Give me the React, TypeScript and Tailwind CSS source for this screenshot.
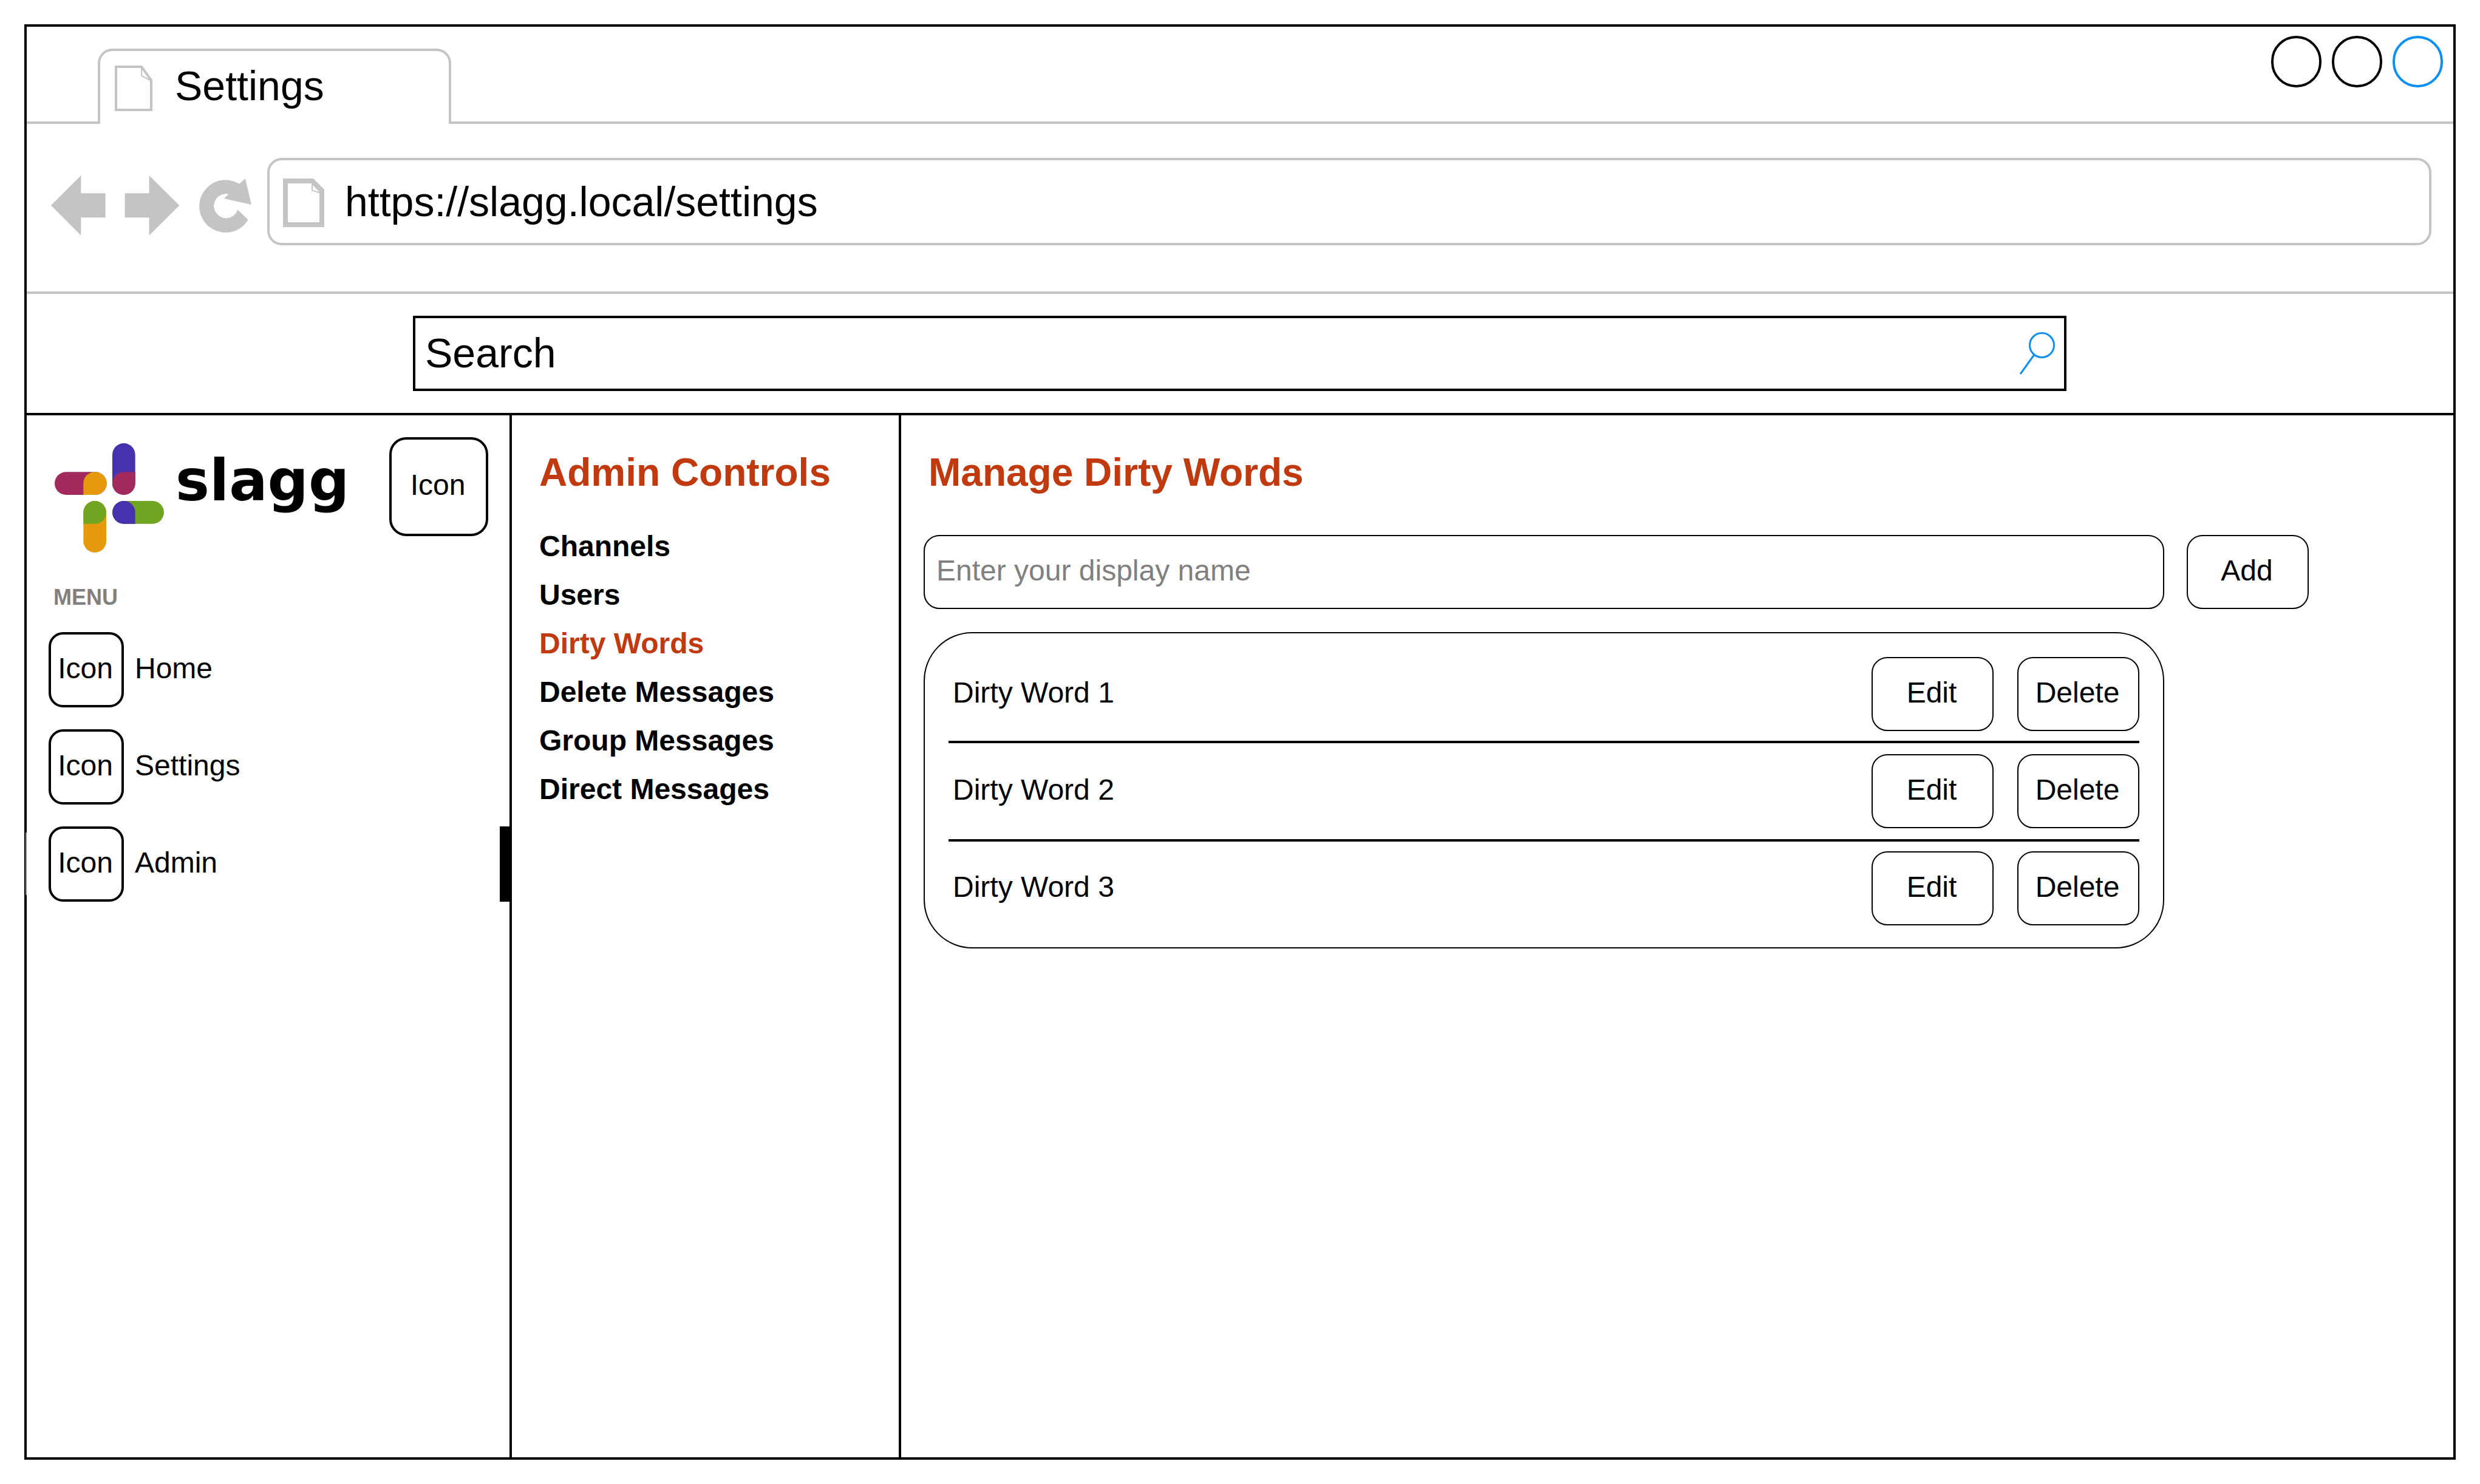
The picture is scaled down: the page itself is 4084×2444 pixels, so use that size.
const sans = "font-['Liberation_Sans',Arial,sans-serif]";

const DocIcon = () => (
  <svg viewBox="0 0 68 80" className="w-[68px] h-[80px] shrink-0">
    <path fill="#c4c4c4" fillRule="evenodd" d="M0 0H50L68 18V80H0ZM8 8V72H60V24L47 20V8Z" />
    <path fill="#c4c4c4" d="M47 8H50L60 20V24L47 20Z" />
    <path fill="#fff" d="M49 11L60 22L49 19Z" />
  </svg>
);

const TabDocIcon = () => (
  <svg viewBox="0 0 62 75" className="w-[62px] h-[75px] shrink-0" fill="none" stroke="#c4c4c4" strokeWidth="4">
    <path d="M2 2H44L60 24V73H2Z" />
    <path strokeWidth="2" d="M44 3V17L60 25" />
  </svg>
);

const NavArrows = () => (
  <svg viewBox="73 146 996 297" className="w-[332px] h-[99px] shrink-0" fill="#c4c4c4">
    <polygon points="73,294 221,146 221,234 342,234 342,354 221,354 221,442" />
    <polygon points="438,234 558,234 558,146 707,294 558,442 558,354 438,354" />
    <path d="M1003 187L1033 162L1063 290L928 260L950 238A60 60 0 1 0 995 315L1047 365A130 130 0 1 1 1003 187Z" />
  </svg>
);

const SearchIcon = () => (
  <svg viewBox="0 0 58 70" className="w-[58px] h-[70px] shrink-0" fill="none" stroke="#0a8ff5" strokeWidth="3">
    <ellipse cx="36.5" cy="21.5" rx="20" ry="20" />
    <path d="M24 37L1 69" />
  </svg>
);

const Logo = () => (
  <svg viewBox="90 90 540 540" className="w-[180px] h-[180px] shrink-0">
    <rect x="90" y="232" width="257" height="113" rx="56.5" fill="#a22a5c" />
    <path fill="#e59a0c" d="M232 345V288A56 56 0 0 1 288 232H290.5A56.5 56.5 0 0 1 290.5 345Z" />
    <rect x="375" y="90" width="113" height="255" rx="56.5" fill="#4731ae" />
    <path fill="#a22a5c" d="M375 288A56 56 0 0 1 431 232H488V288.5A56.5 56.5 0 0 1 375 288.5Z" />
    <rect x="232" y="375" width="113" height="255" rx="56.5" fill="#e59a0c" />
    <path fill="#70a421" d="M232 488V431.5A56.5 56.5 0 0 1 345 431.5A56 56 0 0 1 289 488Z" />
    <rect x="375" y="375" width="255" height="113" rx="56.5" fill="#70a421" />
    <path fill="#4731ae" d="M488 488H431.5A56.5 56.5 0 0 1 431.5 375A56 56 0 0 1 488 431Z" />
  </svg>
);

const NavItem = ({ label, active }: { label: string; active?: boolean }) => (
  <div className="relative flex items-center h-[124px] pl-[36px] gap-[18px]">
    <div className="w-[124px] h-[124px] rounded-[24px] border-4 border-black flex items-center justify-center pb-[5px] pr-[3px]">
      Icon
    </div>
    <span className="mb-[5px]">{label}</span>
    {active && (
      <>
        <div className="absolute -left-[2px] top-[10px] w-[2px] h-[103px] bg-[#8a8a8a]" />
        <div className="absolute right-0 top-0 w-[16px] h-[124px] bg-black" />
      </>
    )}
  </div>
);

const ActionButton = ({ label, className }: { label: string; className?: string }) => (
  <button className={`w-[201px] h-[122px] rounded-[26px] border-2 border-black flex items-center justify-center pb-[5px] pr-[3px] ${className ?? ""}`}>
    {label}
  </button>
);

const WordRow = ({ label }: { label: string }) => (
  <div className="flex items-center h-[122px] pl-[7px]">
    <span className="flex-1 mb-[5px]">{label}</span>
    <ActionButton label="Edit" />
    <ActionButton label="Delete" className="ml-[39px]" />
  </div>
);

const adminLinks = ["Channels", "Users", "Dirty Words", "Delete Messages", "Group Messages", "Direct Messages"];

export default function App() {
  return (
    <div className={`${sans} w-[4084px] h-[2444px] pl-[40px] pt-[40px] bg-white text-black text-[48px] leading-none`}>
      <div className="w-[4004px] h-[2364px] border-4 border-black flex flex-col">
        {/* Tab strip */}
        <div className="h-[160px] shrink-0 flex justify-between border-b-4 border-[#c4c4c4]">
          <div className="ml-[117px] mt-[36px] w-[582px] h-[124px] box-border rounded-t-[24px] border-4 border-b-0 border-[#c4c4c4] bg-white flex pl-[24px] pt-[24px] gap-[37px] text-[68px]">
            <TabDocIcon />
            <span className="-mt-[1px]">Settings</span>
          </div>
          <div className="flex gap-[17px] mt-[15px] mr-[17px]">
            <div className="w-[83px] h-[85px] rounded-full border-4 border-black" />
            <div className="w-[83px] h-[85px] rounded-full border-4 border-black" />
            <div className="w-[83px] h-[85px] rounded-full border-4 border-[#0a8ff5]" />
          </div>
        </div>

        {/* Address bar */}
        <div className="h-[280px] shrink-0 flex items-start pt-[56px] pl-[40px] pr-[36px] border-b-4 border-[#c4c4c4]">
          <div className="mt-[29px]">
            <NavArrows />
          </div>
          <div className="ml-[24px] flex-1 h-[144px] rounded-[24px] border-4 border-[#c4c4c4] flex items-start pl-[22px] pt-[30px] gap-[34px] text-[68px]">
            <DocIcon />
            <span className="mt-[4px]">https://slagg.local/settings</span>
          </div>
        </div>

        {/* Search */}
        <div className="h-[200px] shrink-0 border-b-4 border-black pt-[36px] pl-[636px]">
          <div className="w-[2723px] h-[124px] border-4 border-black flex items-center justify-between pl-[16px] pr-[15px] text-[68px]">
            <span className="-mt-[3px]">Search</span>
            <SearchIcon />
          </div>
        </div>

        <div className="flex-1 flex min-h-0">
          {/* Sidebar */}
          <aside className="w-[799px] shrink-0 border-r-4 border-black">
            <div className="flex items-start pt-[36px]">
              <div className="ml-[46px] mt-[10px]">
                <Logo />
              </div>
              <span className="ml-[19px] mt-[25px] w-[352px] font-['DejaVu_Sans',sans-serif] font-bold text-[94px]">slagg</span>
              <div className="w-[163px] h-[163px] rounded-[28px] border-4 border-black flex items-center justify-center pb-[5px] pr-[3px]">
                Icon
              </div>
            </div>
            <div className="ml-[44px] mt-[56px] font-bold text-[36px] text-[#808080]">MENU</div>
            <div className="mt-[39px] flex flex-col gap-[36px]">
              <NavItem label="Home" />
              <NavItem label="Settings" />
              <NavItem label="Admin" active />
            </div>
          </aside>

          {/* Admin column */}
          <nav className="w-[641px] shrink-0 border-r-4 border-black pl-[45px] pt-[62px]">
            <h2 className="font-bold text-[64px] text-[#c1390f]">Admin Controls</h2>
            <ul className="mt-[66px] flex flex-col gap-[32px] font-bold">
              {adminLinks.map((link) => (
                <li key={link} className={link === "Dirty Words" ? "text-[#c1390f]" : ""}>
                  {link}
                </li>
              ))}
            </ul>
          </nav>

          {/* Main */}
          <main className="flex-1 pl-[37px]">
            <h1 className="pt-[62px] pl-[8px] font-bold text-[64px] text-[#c1390f]">Manage Dirty Words</h1>
            <div className="mt-[71px] flex gap-[37px]">
              <div className="w-[2043px] h-[122px] rounded-[26px] border-2 border-black flex items-center pl-[19px] pb-[5px] text-[#808080]">
                Enter your display name
              </div>
              <ActionButton label="Add" />
            </div>
            <div className="mt-[38px] w-[2043px] h-[521px] rounded-[80px] border-2 border-black pt-[39px] px-[39px]">
              <WordRow label="Dirty Word 1" />
              <div className="h-[4px] bg-black mt-[16px] mb-[18px]" />
              <WordRow label="Dirty Word 2" />
              <div className="h-[4px] bg-black mt-[18px] mb-[16px]" />
              <WordRow label="Dirty Word 3" />
            </div>
          </main>
        </div>
      </div>
    </div>
  );
}
